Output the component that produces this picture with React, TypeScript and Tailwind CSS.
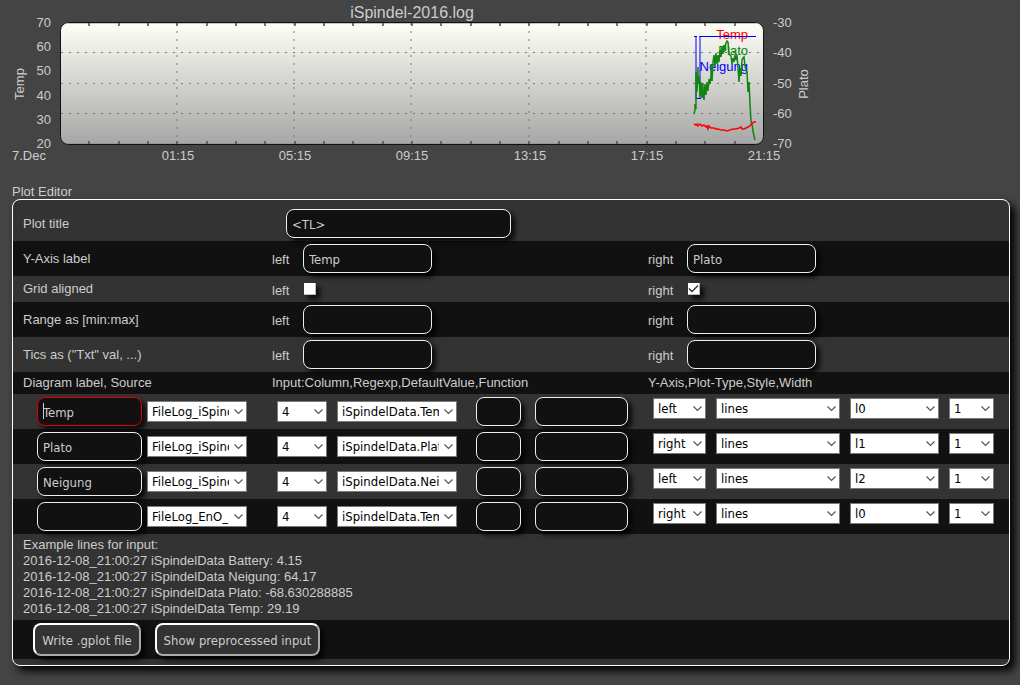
import React from "react";

const SHADOW = "shadow-[4px_4px_5px_#000000cc]";

const TICKS = Array.from({ length: 23 }, (_, i) => Math.round(60 + (i + 1) * 29.33));
const TIMES: [number, string][] = [
  [29, "7.Dec"],
  [178, "01:15"],
  [295, "05:15"],
  [412, "09:15"],
  [530, "13:15"],
  [647, "17:15"],
  [764, "21:15"],
];
const LEFT_AXIS: [number, string][] = [
  [27, "70"],
  [51, "60"],
  [75, "50"],
  [100, "40"],
  [124, "30"],
  [148, "20"],
];
const RIGHT_AXIS: [number, string][] = [
  [27, "-30"],
  [57, "-40"],
  [88, "-50"],
  [118, "-60"],
  [148, "-70"],
];

const PLATO =
  "694,114 695,110 695,104 696,109 696,72 697,92 698,67 698,84 699,76 700,96 701,82 702,98 703,83 703,92 704,100 705,84 706,95 707,82 708,91 709,79 710,84 711,76 711,64 712,81 713,62 714,55 715,66 716,53 717,64 718,55 719,62 720,50 721,57 722,47 723,54 724,45 725,50 726,43 727,41 728,42 729,54 731,56 732,64 733,58 734,62 735,55 736,60 737,55 738,68 739,82 740,68 741,76 742,60 743,58 744,57 745,66 746,70 747,72 748,92 749,82 750,104 751,121 752,124 753,131 754,136 755,140";
const TEMP =
  "694,124 696,125 697,124 698,126 700,124 702,126 704,125 706,127 707,126 708,129 709,126 711,128 714,128 716,129 718,129 721,130 724,130 727,131 730,130 733,129 736,129 739,128 741,127 742,129 744,129 746,128 748,127 750,126 752,123 754,122 756,122";

function Chart() {
  return (
    <svg width="820" height="170" className="block text-[13px]" fill="#ccc" role="img" aria-label="iSpindel-2016.log">
      <defs>
        <linearGradient id="plotFill" x1="0" y1="0" x2="0" y2="1">
          <stop offset="0" stopColor="#fffff7" />
          <stop offset="1" stopColor="#a6a6a6" />
        </linearGradient>
      </defs>
      <text x="412" y="18" fontSize="16" textAnchor="middle">iSpindel-2016.log</text>
      <rect x="60.5" y="22.5" width="703" height="122" rx="8" fill="url(#plotFill)" stroke="#111" />
      <path d="M68 23.5H756M68 143.5H756" stroke="#888" strokeOpacity="0.5" />
      <g stroke="#777" strokeDasharray="2 6" fill="none">
        <path d="M61 52.5H763M61 83.5H763M61 113.5H763" />
        <path
          d="M177 23V144M294 23V144M411 23V144M529 23V144M646 23V144"
          strokeWidth="2"
          strokeOpacity="0.5"
        />
      </g>
      <g stroke="#555" strokeOpacity="0.8" strokeWidth="2">
        {TICKS.map((x) => (
          <path key={x} d={`M${x} 23V26M${x} 141V144`} />
        ))}
      </g>
      {TIMES.map(([x, t]) => (
        <text key={t} x={x} y="160" textAnchor="middle">{t}</text>
      ))}
      {LEFT_AXIS.map(([y, t]) => (
        <text key={t} x="51" y={y} textAnchor="end">{t}</text>
      ))}
      {RIGHT_AXIS.map(([y, t]) => (
        <text key={t} x="773" y={y}>{t}</text>
      ))}
      <text transform="translate(24 84) rotate(-90)" textAnchor="middle">Temp</text>
      <text transform="translate(808 84) rotate(-90)" textAnchor="middle">Plato</text>
      <g textAnchor="end">
        <text x="748" y="39" fill="#f00">Temp</text>
        <text x="748" y="55" fill="#008000">Plato</text>
        <text x="748" y="71" fill="#00f">Neigung</text>
      </g>
      <g fill="none">
        <path d="M694 36.5H697M699 36.5H756M696 98.5H701" stroke="#00f" />
        <path d="M696 36V99M700 36V99" stroke="#00f" strokeOpacity="0.5" strokeWidth="2" />
        <polyline points={PLATO} stroke="#118511" strokeWidth="1.5" />
        <polyline points={TEMP} stroke="#f00" strokeWidth="1.5" />
      </g>
    </svg>
  );
}

function Field({ width, value = "", label, active = false }: { width: string; value?: string; label: string; active?: boolean }) {
  return (
    <span className="relative inline-block">
      <input
        type="text"
        aria-label={label}
        defaultValue={value}
        className={`block h-[29px] rounded-lg border bg-[#111] px-[5px] pt-0.5 font-['DejaVu_Sans_Condensed','Noto_Sans',sans-serif] text-[13px] text-[#ccc] outline-none ${SHADOW} ${width} ${
          active ? "border-[#e00000]" : "border-[#eee]"
        }`}
      />
      {active && <span className="absolute left-1.5 top-1.5 h-4 w-px bg-[#ccc]" />}
    </span>
  );
}

function Select({ width, value, label }: { width: string; value: string; label: string }) {
  return (
    <span className={`relative inline-block ${width}`}>
      <select
        aria-label={label}
        className="block h-[21px] w-full appearance-none overflow-hidden border border-[#7a7a7a] bg-white pl-1 pr-[17px] pt-px font-['DejaVu_Sans_Condensed','Noto_Sans',sans-serif] text-[13px] leading-[18px] text-black"
      >
        <option>{value}</option>
      </select>
      <svg width="9" height="6" className="pointer-events-none absolute right-1 top-2" fill="none" stroke="#555" strokeWidth="1.2">
        <path d="M0.5 0.5L4.5 4.5L8.5 0.5" />
      </svg>
    </span>
  );
}

function Check({ checked = false, label }: { checked?: boolean; label: string }) {
  return (
    <span className="relative inline-block">
      <input
        type="checkbox"
        aria-label={label}
        defaultChecked={checked}
        className={`peer ml-px block size-3 appearance-none border-b border-r border-[#bbb] bg-white ${SHADOW}`}
      />
      <svg
        width="11"
        height="11"
        className="pointer-events-none absolute left-px top-0 hidden peer-checked:block"
        fill="none"
        stroke="#333"
        strokeWidth="1.3"
      >
        <path d="M1 5.5L4 8.5L10 2.5" />
      </svg>
    </span>
  );
}

const COLS = "grid grid-cols-[259fr_376fr_361fr]";

function PairRow({ title, dark = false, left, right }: { title: string; dark?: boolean; left: React.ReactNode; right: React.ReactNode }) {
  return (
    <div className={`${COLS} h-[35px] items-center ${dark ? "bg-[#111]" : ""}`}>
      <div className="pl-2.5">{title}</div>
      <div className="flex items-center">
        <span className="w-[31px] pt-0.5">left</span>
        {left}
      </div>
      <div className="flex items-center">
        <span className="w-[39px] pt-0.5">right</span>
        {right}
      </div>
    </div>
  );
}

const LINES = [
  { label: "Temp", source: "FileLog_iSpindel", regexp: "iSpindelData.Temp", axis: "left", style: "l0" },
  { label: "Plato", source: "FileLog_iSpindel", regexp: "iSpindelData.Plato", axis: "right", style: "l1" },
  { label: "Neigung", source: "FileLog_iSpindel", regexp: "iSpindelData.Neigung", axis: "left", style: "l2" },
  { label: "", source: "FileLog_EnO_", regexp: "iSpindelData.Temp", axis: "right", style: "l0" },
];

const EXAMPLES = ["Battery: 4.15", "Neigung: 64.17", "Plato: -68.630288885", "Temp: 29.19"];

function Button({ children, width }: { children: string; width: string }) {
  return (
    <button
      type="button"
      className={`h-[33px] whitespace-nowrap rounded-lg border-2 border-b-[#aaa] border-l-white border-r-[#aaa] border-t-white bg-[#333] pt-0.5 text-center font-['DejaVu_Sans_Condensed','Noto_Sans',sans-serif] text-[13px] text-[#ccc] ${SHADOW} ${width}`}
    >
      {children}
    </button>
  );
}

export default function App() {
  return (
    <div className="min-h-screen bg-[#444] pb-5 font-['Liberation_Sans',Arial,sans-serif] text-[13px] leading-4 text-[#ccc]">
      <Chart />
      <form className="ml-3 mr-2.5 pt-[13px]" onSubmit={(e) => e.preventDefault()}>
        <h1 className="h-4 leading-[18px]">Plot Editor</h1>
        <div className="rounded-lg border border-white bg-[#333] pb-1.5 shadow-[5px_5px_8px_#000]">
          <div className={`${COLS} h-[41px] items-center pt-1.5`}>
            <div className="pl-2.5">Plot title</div>
            <div className="col-span-2 pl-3.5">
              <Field width="w-[225px]" value="<TL>" label="Plot title" />
            </div>
          </div>
          <PairRow
            title="Y-Axis label"
            dark
            left={<Field width="w-[129px]" value="Temp" label="Left axis label" />}
            right={<Field width="w-[129px]" value="Plato" label="Right axis label" />}
          />
          <div className={`${COLS} h-[26px] items-center`}>
            <div className="pl-2.5">Grid aligned</div>
            <div className="flex items-center">
              <span className="w-[31px] pt-1">left</span>
              <Check label="Grid aligned left" />
            </div>
            <div className="flex items-center">
              <span className="w-[39px] pt-1">right</span>
              <Check checked label="Grid aligned right" />
            </div>
          </div>
          <PairRow
            title="Range as [min:max]"
            dark
            left={<Field width="w-[129px]" label="Left range" />}
            right={<Field width="w-[129px]" label="Right range" />}
          />
          <PairRow
            title={'Tics as ("Txt" val, ...)'}
            left={<Field width="w-[129px]" label="Left tics" />}
            right={<Field width="w-[129px]" label="Right tics" />}
          />
          <div className={`${COLS} bg-[#111] py-[3px]`}>
            <div className="pl-2.5">Diagram label, Source</div>
            <div>Input:Column,Regexp,DefaultValue,Function</div>
            <div>Y-Axis,Plot-Type,Style,Width</div>
          </div>
          {LINES.map((line, i) => (
            <div key={i} className={`${COLS} h-[35px] items-center ${i % 2 ? "bg-[#111]" : ""}`}>
              <div className="flex items-center gap-[5px] pl-6">
                <Field width="w-[105px]" value={line.label} label={`Diagram label ${i + 1}`} active={i === 0} />
                <Select width="w-[100px]" value={line.source} label={`Source ${i + 1}`} />
              </div>
              <div className="flex items-center pl-[5px]">
                <div className="mr-[19px] flex gap-2.5">
                  <Select width="w-[50px]" value="4" label={`Column ${i + 1}`} />
                  <Select width="w-[120px]" value={line.regexp} label={`Regexp ${i + 1}`} />
                </div>
                <div className="flex gap-3.5">
                  <Field width="w-[45px]" label={`Default value ${i + 1}`} />
                  <Field width="w-[93px]" label={`Function ${i + 1}`} />
                </div>
              </div>
              <div className="flex gap-2.5 pb-1.5 pl-[5px]">
                <Select width="w-[53px]" value={line.axis} label={`Y-Axis ${i + 1}`} />
                <Select width="w-[124px]" value="lines" label={`Plot type ${i + 1}`} />
                <Select width="w-[89px]" value={line.style} label={`Style ${i + 1}`} />
                <Select width="w-[45px]" value="1" label={`Width ${i + 1}`} />
              </div>
            </div>
          ))}
          <div className="py-[3px] pl-2.5">
            <p>Example lines for input:</p>
            {EXAMPLES.map((t) => (
              <p key={t}>2016-12-08_21:00:27 iSpindelData {t}</p>
            ))}
          </div>
          <div className="flex h-[39px] items-center gap-3.5 bg-[#111] pl-5">
            <Button width="w-[108px]">Write .gplot file</Button>
            <Button width="w-[165px]">Show preprocessed input</Button>
          </div>
        </div>
      </form>
    </div>
  );
}
